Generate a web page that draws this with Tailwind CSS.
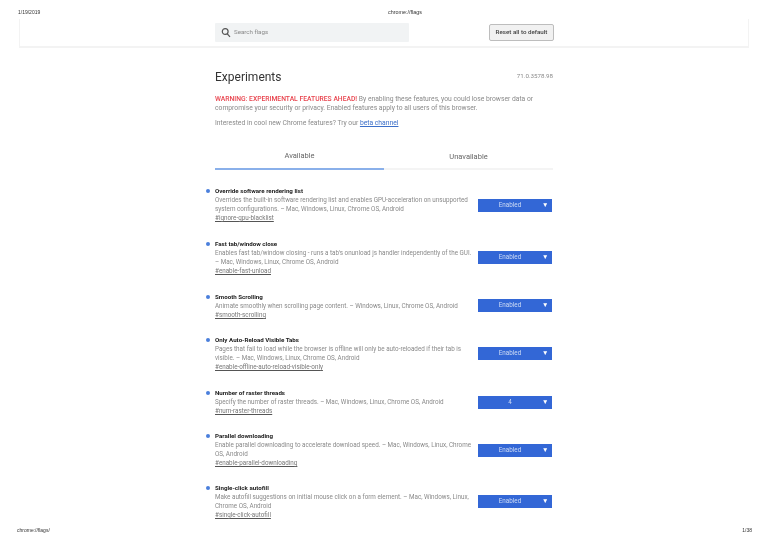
<!DOCTYPE html>
<html lang="en">
<head>
    <meta charset="UTF-8">
    <title>chrome://flags</title>
    <script src="https://cdn.jsdelivr.net/npm/@tailwindcss/browser@4"></script>
</head>
<body class="bg-white w-[768px] h-[543px] overflow-hidden font-['Roboto',sans-serif]">
<div class="relative w-[768px] h-[543px] blur-[0.35px]">
    <!-- print header -->
    <div class="h-[19px] pt-[9px] pl-[18px] flex text-[5px] leading-[6px] text-[#333] font-['Liberation_Sans',sans-serif]">
        <span class="w-[370px]">1/19/2019</span>
        <span class="text-[5.4px]">chrome://flags</span>
    </div>

    <!-- search bar -->
    <div class="ml-[19px] w-[730px] h-[29px] border-b-2 border-x border-[#f3f3f3] flex items-start pt-[4px] pl-[195px]">
        <div class="w-[194px] h-[19px] bg-[#f1f3f4] rounded-[1px] flex items-center pl-[6px] gap-[3px]">
            <svg width="10" height="11" viewBox="0 0 10 11" fill="none" stroke="#555" stroke-width="1.2"><circle cx="4.2" cy="4.5" r="2.9"/><path d="M6.3 6.8 L9 9.8"/></svg>
            <span class="text-[6.2px] text-[#8a8a8a]">Search flags</span>
        </div>
        <div class="ml-[80px] mt-[1px] w-[65px] h-[17px] bg-[#f1f1f1] border border-[#bdbdbd] rounded-[2px] flex items-center justify-center text-[6.2px] font-medium text-[#444]">Reset all to default</div>
    </div>

    <main class="ml-[215px] w-[338px]">
        <div class="flex justify-between items-center mt-[21px] h-[16px]">
            <h1 class="text-[12px] text-[#333]">Experiments</h1>
            <span class="text-[6.2px] text-[#8a8a8a]">71.0.3578.98</span>
        </div>
        <p class="mt-[9.5px] text-[6.75px] leading-[9.5px] text-[#8a8a8a]"><span class="text-[#e8434d] font-medium">WARNING: EXPERIMENTAL FEATURES AHEAD!</span> By enabling these features, you could lose browser data or compromise your security or privacy. Enabled features apply to all users of this browser.</p>
        <p class="mt-[5px] text-[6.75px] leading-[9.5px] text-[#8a8a8a]">Interested in cool new Chrome features? Try our <a class="text-[#3b6fc9] underline">beta channel</a></p>

        <div class="mt-[22.5px] flex text-[7.5px] leading-[10px] text-[#666]">
            <div class="w-[169px] h-[19px] border-b-2 border-[#8ab0ea] text-center">Available</div>
            <div class="w-[169px] h-[19px] border-b-2 border-[#f4f4f4] text-center pt-[1px]">Unavailable</div>
        </div>

        <div class="mt-[16px] flex flex-col text-[6.3px] leading-[9px] text-[#8a8a8a]">
            <div class="flex h-[53px]">
                <span class="-ml-[9px] mr-[5px] mt-[3px] w-[4px] h-[4px] rounded-full bg-[#4a7fdc]"></span>
                <div class="w-[257px]">
                    <div class="font-bold text-[#222] text-[6.2px] leading-[10px]">Override software rendering list</div>
                    <div>Overrides the built-in software rendering list and enables GPU-acceleration on unsupported system configurations. – Mac, Windows, Linux, Chrome OS, Android</div>
                    <a class="block mt-[0.5px] underline decoration-[#555] text-[#777]">#ignore-gpu-blacklist</a>
                </div>
                <div class="ml-[6px] mt-[13px] w-[74px] h-[13px] bg-[#3367d6] flex items-center text-[#cfdcf5]"><span class="flex-1 text-center">Enabled</span><span class="w-[10px] text-white text-[6.5px]">▼</span></div>
            </div>
            <div class="flex h-[53px]">
                <span class="-ml-[9px] mr-[5px] mt-[3px] w-[4px] h-[4px] rounded-full bg-[#4a7fdc]"></span>
                <div class="w-[257px]">
                    <div class="font-bold text-[#222] text-[6.2px] leading-[10px]">Fast tab/window close</div>
                    <div>Enables fast tab/window closing - runs a tab's onunload js handler independently of the GUI. – Mac, Windows, Linux, Chrome OS, Android</div>
                    <a class="block mt-[0.5px] underline decoration-[#555] text-[#777]">#enable-fast-unload</a>
                </div>
                <div class="ml-[6px] mt-[12px] w-[74px] h-[13px] bg-[#3367d6] flex items-center text-[#cfdcf5]"><span class="flex-1 text-center">Enabled</span><span class="w-[10px] text-white text-[6.5px]">▼</span></div>
            </div>
            <div class="flex h-[43px]">
                <span class="-ml-[9px] mr-[5px] mt-[3px] w-[4px] h-[4px] rounded-full bg-[#4a7fdc]"></span>
                <div class="w-[257px]">
                    <div class="font-bold text-[#222] text-[6.2px] leading-[10px]">Smooth Scrolling</div>
                    <div>Animate smoothly when scrolling page content. – Windows, Linux, Chrome OS, Android</div>
                    <a class="block mt-[0.5px] underline decoration-[#555] text-[#777]">#smooth-scrolling</a>
                </div>
                <div class="ml-[6px] mt-[7px] w-[74px] h-[13px] bg-[#3367d6] flex items-center text-[#cfdcf5]"><span class="flex-1 text-center">Enabled</span><span class="w-[10px] text-white text-[6.5px]">▼</span></div>
            </div>
            <div class="flex h-[53px]">
                <span class="-ml-[9px] mr-[5px] mt-[3px] w-[4px] h-[4px] rounded-full bg-[#4a7fdc]"></span>
                <div class="w-[257px]">
                    <div class="font-bold text-[#222] text-[6.2px] leading-[10px]">Only Auto-Reload Visible Tabs</div>
                    <div>Pages that fail to load while the browser is offline will only be auto-reloaded if their tab is visible. – Mac, Windows, Linux, Chrome OS, Android</div>
                    <a class="block mt-[0.5px] underline decoration-[#555] text-[#777]">#enable-offline-auto-reload-visible-only</a>
                </div>
                <div class="ml-[6px] mt-[12px] w-[74px] h-[13px] bg-[#3367d6] flex items-center text-[#cfdcf5]"><span class="flex-1 text-center">Enabled</span><span class="w-[10px] text-white text-[6.5px]">▼</span></div>
            </div>
            <div class="flex h-[43px]">
                <span class="-ml-[9px] mr-[5px] mt-[3px] w-[4px] h-[4px] rounded-full bg-[#4a7fdc]"></span>
                <div class="w-[257px]">
                    <div class="font-bold text-[#222] text-[6.2px] leading-[10px]">Number of raster threads</div>
                    <div>Specify the number of raster threads. – Mac, Windows, Linux, Chrome OS, Android</div>
                    <a class="block mt-[0.5px] underline decoration-[#555] text-[#777]">#num-raster-threads</a>
                </div>
                <div class="ml-[6px] mt-[8px] w-[74px] h-[13px] bg-[#3367d6] flex items-center text-[#cfdcf5]"><span class="flex-1 text-center">4</span><span class="w-[10px] text-white text-[6.5px]">▼</span></div>
            </div>
            <div class="flex h-[52px]">
                <span class="-ml-[9px] mr-[5px] mt-[3px] w-[4px] h-[4px] rounded-full bg-[#4a7fdc]"></span>
                <div class="w-[257px]">
                    <div class="font-bold text-[#222] text-[6.2px] leading-[10px]">Parallel downloading</div>
                    <div>Enable parallel downloading to accelerate download speed. – Mac, Windows, Linux, Chrome OS, Android</div>
                    <a class="block mt-[0.5px] underline decoration-[#555] text-[#777]">#enable-parallel-downloading</a>
                </div>
                <div class="ml-[6px] mt-[13px] w-[74px] h-[13px] bg-[#3367d6] flex items-center text-[#cfdcf5]"><span class="flex-1 text-center">Enabled</span><span class="w-[10px] text-white text-[6.5px]">▼</span></div>
            </div>
            <div class="flex h-[36px]">
                <span class="-ml-[9px] mr-[5px] mt-[3px] w-[4px] h-[4px] rounded-full bg-[#4a7fdc]"></span>
                <div class="w-[257px]">
                    <div class="font-bold text-[#222] text-[6.2px] leading-[10px]">Single-click autofill</div>
                    <div>Make autofill suggestions on initial mouse click on a form element. – Mac, Windows, Linux, Chrome OS, Android</div>
                    <a class="block mt-[0.5px] underline decoration-[#555] text-[#777]">#single-click-autofill</a>
                </div>
                <div class="ml-[6px] mt-[12px] w-[74px] h-[13px] bg-[#3367d6] flex items-center text-[#cfdcf5]"><span class="flex-1 text-center">Enabled</span><span class="w-[10px] text-white text-[6.5px]">▼</span></div>
            </div>
        </div>
    </main>

    <!-- print footer -->
    <div class="absolute left-[17px] right-[16px] top-[527px] flex justify-between text-[5px] leading-[6px] text-[#333] font-['Liberation_Sans',sans-serif]">
        <span>chrome://flags/</span>
        <span>1/38</span>
    </div>
</div>
</body>
</html>
